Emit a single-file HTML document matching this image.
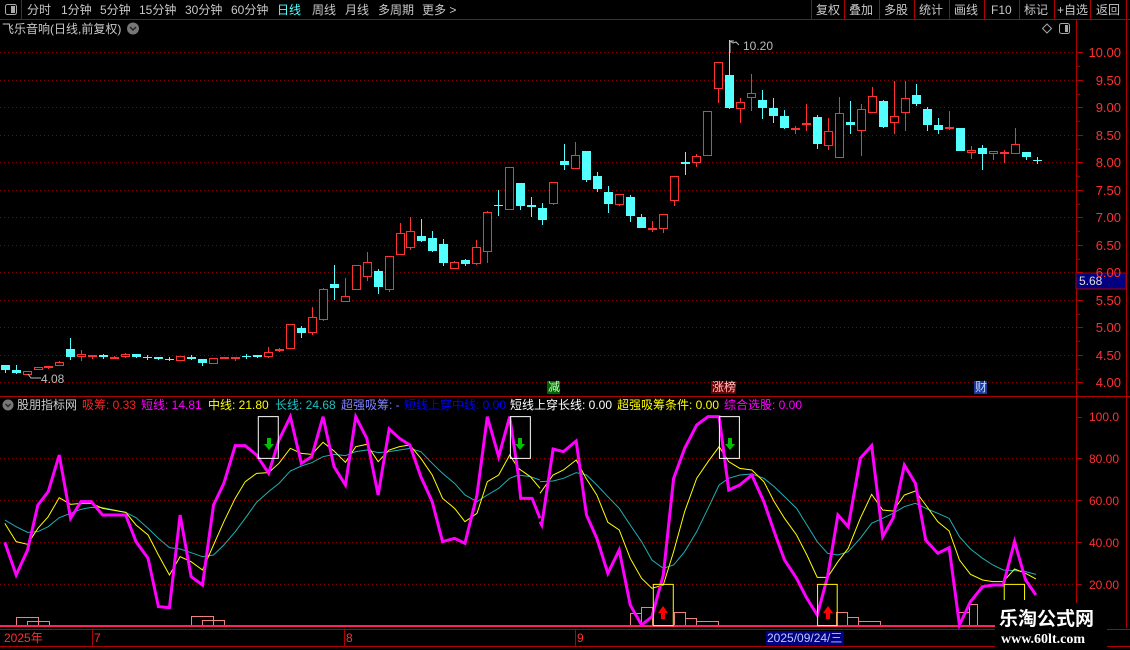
<!DOCTYPE html>
<html><head><meta charset="utf-8">
<style>
html,body{margin:0;padding:0;background:#000;width:1130px;height:650px;overflow:hidden}
body{position:relative;font-family:"Liberation Sans","Noto Sans CJK SC",sans-serif;color:#c8c8c8}
.t{position:absolute;white-space:nowrap;font-size:12px;line-height:14px}
svg{position:absolute;left:0;top:0}
</style></head><body>
<svg width="1130" height="650" id="s">
 <!-- toolbar -->
 <line x1="0" y1="19.5" x2="1130" y2="19.5" stroke="#b00000"/>
 <line x1="21.5" y1="0" x2="21.5" y2="19" stroke="#b00000"/>
 <rect x="5.5" y="4.5" width="11" height="10" rx="2" fill="none" stroke="#aaa"/>
 <rect x="11" y="6" width="4" height="7" fill="#aaa"/>
 <g stroke="#b00000">
  <line x1="811.5" y1="0" x2="811.5" y2="19"/><line x1="844.5" y1="0" x2="844.5" y2="19"/>
  <line x1="879.5" y1="0" x2="879.5" y2="19"/><line x1="914.5" y1="0" x2="914.5" y2="19"/>
  <line x1="949.5" y1="0" x2="949.5" y2="19"/><line x1="984.5" y1="0" x2="984.5" y2="19"/>
  <line x1="1019.5" y1="0" x2="1019.5" y2="19"/><line x1="1054.5" y1="0" x2="1054.5" y2="19"/>
  <line x1="1090.5" y1="0" x2="1090.5" y2="19"/><line x1="1126.5" y1="0" x2="1126.5" y2="19"/>
 </g>
 <!-- axes -->
 <line x1="1076.5" y1="20" x2="1076.5" y2="628" stroke="#b00000"/>
 <line x1="1126.5" y1="20" x2="1126.5" y2="628" stroke="#b00000"/>
 <line x1="0" y1="396.5" x2="1130" y2="396.5" stroke="#b00000"/>
 <line x1="0" y1="629.5" x2="1130" y2="629.5" stroke="#b00000"/>
 <line x1="0" y1="646.5" x2="1130" y2="646.5" stroke="#b00000"/>
 <g id="grid" stroke="#8a0000" stroke-dasharray="1,3"></g>
 <g id="ticks" stroke="#b00000"></g>
 <g id="candles"></g>
 <!-- title icons -->
 <circle cx="133" cy="28.5" r="6" fill="#777"/>
 <path d="M130 27l3 3 3-3" stroke="#222" stroke-width="1.5" fill="none"/>
 <path d="M1047 24l4.5 4.5-4.5 4.5-4.5-4.5z" fill="none" stroke="#aaa"/>
 <rect x="1059.5" y="23.5" width="10" height="10" rx="2" fill="none" stroke="#aaa"/>
 <rect x="1065" y="25" width="3" height="7" fill="#aaa"/>
 <!-- 10.20 / 4.08 markers -->
 <path d="M730 53V41h4M730 41l3 2 3-1 3 3" stroke="#bbb" fill="none"/>
 <path d="M28 374l3 4h10" stroke="#bbb" fill="none"/>
 <!-- 5.68 -->
 <rect x="1076" y="273" width="50" height="16" fill="#000080" stroke="#b00000"/>
 <!-- signal labels -->
 <rect x="547" y="381" width="13" height="13" fill="#006400"/>
 <rect x="711" y="381" width="25" height="13" fill="#6a0000"/>
 <rect x="974" y="381" width="13" height="13" fill="#1a3a9a"/>
 <!-- indicator -->
 <circle cx="8" cy="405" r="5.5" fill="#777"/>
 <path d="M5.5 404l2.5 2.5 2.5-2.5" stroke="#222" stroke-width="1.3" fill="none"/>
 <g stroke="#8a0000" stroke-dasharray="1,3">
  <line x1="0" y1="458.5" x2="1076" y2="458.5"/><line x1="0" y1="500.5" x2="1076" y2="500.5"/>
  <line x1="0" y1="542.5" x2="1076" y2="542.5"/><line x1="0" y1="584.5" x2="1076" y2="584.5"/>
 </g>
 <g stroke="#b00000">
  <line x1="1076" y1="417.5" x2="1082" y2="417.5"/><line x1="1076" y1="458.5" x2="1082" y2="458.5"/>
  <line x1="1076" y1="500.5" x2="1082" y2="500.5"/><line x1="1076" y1="542.5" x2="1082" y2="542.5"/>
  <line x1="1076" y1="584.5" x2="1082" y2="584.5"/>
 </g>
 <!-- histogram bits -->
 <g fill="none" stroke="#f08080">
  <rect x="16.5" y="617.5" width="22" height="9"/><rect x="27.5" y="621.5" width="22" height="5"/>
  <rect x="191.5" y="616.5" width="22" height="10"/><rect x="202.5" y="620.5" width="22" height="6"/>
  <rect x="630.5" y="613.5" width="11" height="13"/><rect x="641.5" y="607.5" width="11" height="19"/>
  <rect x="674.5" y="612.5" width="11" height="14"/><rect x="685.5" y="618.5" width="11" height="8"/>
  <rect x="696.5" y="621.5" width="22" height="5"/>
  <rect x="836.5" y="612.5" width="11" height="14"/><rect x="847.5" y="617.5" width="11" height="9"/>
  <rect x="858.5" y="621.5" width="22" height="5"/>
  <rect x="958.5" y="612.5" width="11" height="14"/><rect x="969.5" y="604.5" width="8" height="22"/>
 </g>
 <line x1="0" y1="626" x2="1076" y2="626" stroke="#ff2060" stroke-width="2"/>
 <g transform="translate(0,405) scale(0.34439,0.33333)" fill="none">
  <polyline vector-effect="non-scaling-stroke" stroke="#20b0b0" stroke-width="1" points="14,345 47,365 80,382 110,380 140,365 172,338 205,325 235,313 265,307 298,308 365,322 395,338 430,370 460,400 492,428 523,432 555,443 588,455 620,450 650,420 683,380 712,340 745,292 780,260 810,235 843,198 875,183 905,173 938,155 970,148 1003,152 1033,140 1065,135 1098,143 1130,140 1160,135 1190,130 1222,140 1255,175 1285,205 1320,235 1350,270 1385,290 1415,270 1448,250 1480,220 1505,210 1540,215 1568,225"/>
  <polyline vector-effect="non-scaling-stroke" stroke="#ffff00" stroke-width="1" points="14,355 47,410 80,418 110,370 140,335 172,278 205,298 235,295 265,295 298,310 365,322 395,360 430,390 460,450 492,510 523,455 555,470 588,495 620,420 650,350 683,280 712,230 745,205 780,203 810,175 843,130 875,145 905,148 938,112 970,138 1003,172 1033,125 1065,118 1098,170 1130,135 1160,125 1190,120 1222,160 1255,210 1285,280 1320,310 1350,350 1385,325 1415,230 1448,210 1480,150 1505,190 1540,215 1568,250"/>
  <polyline vector-effect="non-scaling-stroke" stroke="#ff00ff" stroke-width="3" points="14,412 47,510 80,435 110,300 140,260 172,150 205,340 235,290 265,290 298,330 365,330 395,410 430,460 460,605 492,608 523,330 555,515 588,540 620,300 650,235 683,122 712,122 745,150 780,205 810,105 843,35 875,175 905,155 938,35 970,185 1003,240 1033,35 1065,100 1098,270 1130,72 1160,100 1190,120 1222,215 1255,290 1285,410 1320,400 1350,415 1385,270 1415,35 1448,155 1480,35 1505,210 1512,280 1545,280 1568,340"/>
  <rect vector-effect="non-scaling-stroke" x="750" y="35" width="58" height="125" stroke="#fff"/>
  <rect vector-effect="non-scaling-stroke" x="1482" y="35" width="58" height="125" stroke="#fff"/>
 </g>
 <g transform="translate(540,405) scale(0.34439,0.33333)" fill="none">
  <polyline vector-effect="non-scaling-stroke" stroke="#20b0b0" stroke-width="1" points="0,230 38,228 68,220 105,203 135,210 165,240 197,275 230,310 262,360 295,410 325,465 358,490 388,480 420,440 455,380 488,310 520,240 548,220 580,210 615,207 650,220 680,245 710,275 745,310 775,360 805,410 835,445 865,450 895,440 930,400 963,355 995,340 1025,325 1058,305 1090,295 1120,310 1155,325 1188,340 1218,395 1250,432 1285,460 1315,480 1345,495 1378,497 1410,500 1440,508"/>
  <polyline vector-effect="non-scaling-stroke" stroke="#ffff00" stroke-width="1" points="0,265 38,210 68,195 105,165 135,222 165,270 197,352 230,375 262,460 295,520 325,550 358,540 388,440 420,320 455,220 488,170 520,125 548,170 580,190 615,195 650,230 680,290 710,340 745,390 775,450 805,517 835,517 865,470 895,430 930,340 963,268 995,315 1025,318 1058,270 1090,258 1120,300 1155,350 1188,378 1218,465 1250,508 1285,525 1315,530 1345,530 1378,492 1410,505 1440,522"/>
  <polyline vector-effect="non-scaling-stroke" stroke="#ff00ff" stroke-width="3" points="0,350 5,360 38,132 68,140 105,108 135,330 165,400 197,505 230,435 262,600 295,660 325,635 358,510 388,220 420,130 455,60 488,35 520,35 548,255 580,240 615,210 650,290 680,380 710,465 745,520 775,580 805,630 835,515 865,330 895,365 930,160 963,122 995,395 1025,340 1058,180 1090,235 1120,405 1155,445 1188,428 1218,660 1250,590 1285,545 1315,540 1345,540 1378,410 1410,525 1440,570"/>
  <rect vector-effect="non-scaling-stroke" x="521" y="35" width="58" height="125" stroke="#fff"/>
  <rect vector-effect="non-scaling-stroke" x="329" y="538" width="58" height="124" stroke="#ffff00"/>
  <rect vector-effect="non-scaling-stroke" x="806" y="538" width="57" height="124" stroke="#ffff00"/>
  <polyline vector-effect="non-scaling-stroke" stroke="#ffff00" points="1348,585 1348,538 1407,538 1407,585"/>
 </g>
 <!-- arrows -->
 <g fill="#00c000">
  <path d="M267 438h4v6h3l-5 6-5-6h3z"/><path d="M518 438h4v6h3l-5 6-5-6h3z"/><path d="M728 438h4v6h3l-5 6-5-6h3z"/>
 </g>
 <g fill="#ff0000">
  <path d="M661 619h4v-6h3l-5-7-5 7h3z"/><path d="M826 619h4v-6h3l-5-7-5 7h3z"/>
 </g>
 <!-- date bar -->
 <g stroke="#b00000">
  <line x1="92.5" y1="630" x2="92.5" y2="646"/><line x1="344.5" y1="630" x2="344.5" y2="646"/><line x1="575.5" y1="630" x2="575.5" y2="646"/>
 </g>
 <rect x="766" y="631" width="78" height="14" fill="#000080"/>
 <!-- watermark bg -->
 <rect x="995" y="603" width="112" height="47" fill="#000"/>
</svg>

<div class="t" style="left:27px;top:3px;color:#c8c8c8">分时</div>
<div class="t" style="left:61px;top:3px">1分钟</div>
<div class="t" style="left:100px;top:3px">5分钟</div>
<div class="t" style="left:139px;top:3px">15分钟</div>
<div class="t" style="left:185px;top:3px">30分钟</div>
<div class="t" style="left:231px;top:3px">60分钟</div>
<div class="t" style="left:277px;top:3px;color:#54ffff">日线</div>
<div class="t" style="left:312px;top:3px">周线</div>
<div class="t" style="left:345px;top:3px">月线</div>
<div class="t" style="left:378px;top:3px">多周期</div>
<div class="t" style="left:422px;top:3px">更多 &gt;</div>
<div class="t" style="left:816px;top:3px">复权</div>
<div class="t" style="left:849px;top:3px">叠加</div>
<div class="t" style="left:884px;top:3px">多股</div>
<div class="t" style="left:919px;top:3px">统计</div>
<div class="t" style="left:954px;top:3px">画线</div>
<div class="t" style="left:991px;top:3px">F10</div>
<div class="t" style="left:1024px;top:3px">标记</div>
<div class="t" style="left:1057px;top:3px">+自选</div>
<div class="t" style="left:1096px;top:3px">返回</div>
<div class="t" style="left:2px;top:22px">飞乐音响(日线,前复权)</div>
<div class="t" style="left:743px;top:39px;color:#bbb">10.20</div>
<div class="t" style="left:41px;top:372px;color:#bbb">4.08</div>
<div class="t" style="left:548px;top:380px;color:#bfffbf">减</div>
<div class="t" style="left:712px;top:380px;color:#ffc0c0">涨榜</div>
<div class="t" style="left:975px;top:380px;color:#c0d0ff">财</div>
<div class="t" style="left:1079px;top:274px;color:#ddd">5.68</div>
<div id="axis"></div>
<div class="t" style="left:17px;top:398px;color:#ccc">股朋指标网</div>
<div class="t" style="left:82px;top:398px;color:#ff2020">吸筹: 0.33</div>
<div class="t" style="left:141px;top:398px;color:#ff00ff">短线: 14.81</div>
<div class="t" style="left:208px;top:398px;color:#ffff00">中线: 21.80</div>
<div class="t" style="left:275px;top:398px;color:#20c0c0">长线: 24.68</div>
<div class="t" style="left:341px;top:398px;color:#8080ff">超强吸筹: -</div>
<div class="t" style="left:404px;top:398px;color:#0000ff">短线上穿中线: 0.00</div>
<div class="t" style="left:510px;top:398px;color:#fff">短线上穿长线: 0.00</div>
<div class="t" style="left:617px;top:398px;color:#ffff00">超强吸筹条件: 0.00</div>
<div class="t" style="left:724px;top:398px;color:#ff00ff">综合选股: 0.00</div>
<div class="t" style="left:1089px;top:410px;color:#ff3030">100.0</div>
<div class="t" style="left:1089px;top:452px;color:#ff3030">80.00</div>
<div class="t" style="left:1089px;top:494px;color:#ff3030">60.00</div>
<div class="t" style="left:1089px;top:536px;color:#ff3030">40.00</div>
<div class="t" style="left:1089px;top:578px;color:#ff3030">20.00</div>
<div class="t" style="left:4px;top:631px;color:#ff3030">2025年</div>
<div class="t" style="left:94px;top:631px;color:#ff3030">7</div>
<div class="t" style="left:346px;top:631px;color:#ff3030">8</div>
<div class="t" style="left:577px;top:631px;color:#ff3030">9</div>
<div class="t" style="left:767px;top:631px;color:#c0c8ff">2025/09/24/三</div>
<div class="t" style="left:999px;top:607px;font-size:19px;line-height:22px;font-weight:bold;color:#fff;font-family:'Noto Sans CJK SC',sans-serif">乐淘公式网</div>
<div class="t" style="left:1001px;top:632px;font-size:14px;line-height:16px;font-weight:bold;color:#fff;font-family:'Liberation Serif',serif">www.60lt.com</div>

<script>
var NS="http://www.w3.org/2000/svg";
function el(t,a,p){var e=document.createElementNS(NS,t);for(var k in a)e.setAttribute(k,a[k]);p.appendChild(e);return e;}
var grid=document.getElementById('grid'),ticks=document.getElementById('ticks'),axis=document.getElementById('axis');
var h='';
for(var i=0;i<=12;i++){var p=10-i*0.5,y=Math.round(52+i*27.5)+0.5;
 el('line',{x1:0,y1:y,x2:1076,y2:y},grid);
 el('line',{x1:1076,y1:y,x2:1083,y2:y},ticks);
 if(Math.abs(p-6)>0.01||true) h+='<div class="t" style="left:1083px;width:38px;text-align:right;top:'+(y-7)+'px;color:#ff3030;font-size:13px">'+p.toFixed(2)+'</div>';
 el('line',{x1:1076,y1:y+13.75,x2:1080,y2:y+13.75},ticks);
}
axis.innerHTML=h;
var D=[[5,0,365,370,365,373],[16,0,370,373,365,374],[27,1,371,375],[38,1,367,370],[48,1,366,367,366,369],[59,1,362,366,361,366],[70,0,349,357,338,360],[81,1,354,357,350,361],[92,1,355,356,355,359],[103,0,355,357,354,359],[114,1,357,358,356,359],[125,1,354,357,353,358],[136,0,354,357,354,358],[147,0,357,358,355,360],[158,0,357,359,357,360],[169,0,359,360,357,361],[180,1,356,361],[191,0,357,359,355,360],[202,0,359,363,359,366],[213,1,358,364],[224,1,357,359],[235,1,357,358,357,361],[246,0,356,357,354,359],[257,0,355,357,355,358],[268,1,352,357,347,358],[279,1,349,351,348,352],[290,1,324,349],[301,0,328,333,326,338],[312,1,317,333,307,335],[323,1,289,320,288,321],[334,0,284,288,265,300],[345,1,296,302,278,302],[356,1,265,290],[367,1,262,277,252,281],[378,0,271,287,269,294],[389,1,256,290,256,292],[400,1,233,255,223,255],[410,1,231,248,217,250],[421,0,236,241,219,242],[432,0,238,251,231,252],[443,0,244,263,239,266],[454,1,262,269,261,269],[465,0,260,264,259,266],[476,1,247,264,240,265],[487,1,212,252,211,263],[498,0,205,206,190,216],[509,1,167,210],[520,0,183,206,183,210],[531,0,205,207,197,217],[542,0,208,220,203,225],[553,1,182,204,182,205],[564,0,161,165,144,170],[575,1,155,169,142,169],[586,0,151,180,151,182],[597,0,176,189,172,192],[608,0,192,204,186,213],[619,1,194,205,194,206],[630,0,197,216,195,222],[641,0,217,228,214,228],[652,1,228,230,221,232],[663,1,214,229,214,233],[674,1,176,201,176,206],[685,0,162,164,152,175],[696,1,156,163,154,167],[707,1,111,156],[718,1,62,89,62,103],[729,0,75,108,40,109],[740,1,102,109,98,123],[751,1,93,98,74,111],[762,0,100,108,90,119],[773,0,108,116,98,123],[784,0,116,128,110,129],[795,1,128,130,126,134],[806,1,123,125,104,131],[817,0,117,144,115,149],[828,1,131,146,118,150],[839,1,113,158,97,158],[850,0,122,125,101,134],[861,1,109,131,104,156],[872,1,96,113,87,113],[883,0,101,127,100,128],[894,1,116,123,81,134],[905,1,98,113,81,131],[916,0,95,104,84,106],[927,0,109,125,107,131],[938,0,125,130,118,134],[949,1,127,129,111,130],[960,0,128,151],[971,1,150,153,146,159],[982,0,148,154,145,170],[993,1,151,154,151,160],[1004,1,152,154,150,163],[1015,1,144,154,128,154],[1026,0,152,157,152,160],[1037,0,160,161,157,164]];
var g=document.getElementById('candles');
D.forEach(function(c){var x=c[0],up=c[1],t=c[2],b=c[3],wt=c.length>4?c[4]:t,wb=c.length>4?c[5]:b;
 var col=up?'#ff3232':'#54ffff';
 if(wt<t) el('line',{x1:x+0.5,y1:wt,x2:x+0.5,y2:t,stroke:col},g);
 if(wb>b) el('line',{x1:x+0.5,y1:b,x2:x+0.5,y2:wb,stroke:col},g);
 if(up){ if(b-t<=2) el('rect',{x:x-4,y:t,width:9,height:2,fill:col},g);
  else el('rect',{x:x-3.5,y:t+0.5,width:8,height:b-t-1,fill:'#000',stroke:col},g);}
 else el('rect',{x:x-4,y:t,width:9,height:Math.max(1,b-t),fill:col},g);
});
</script>
</body></html>
